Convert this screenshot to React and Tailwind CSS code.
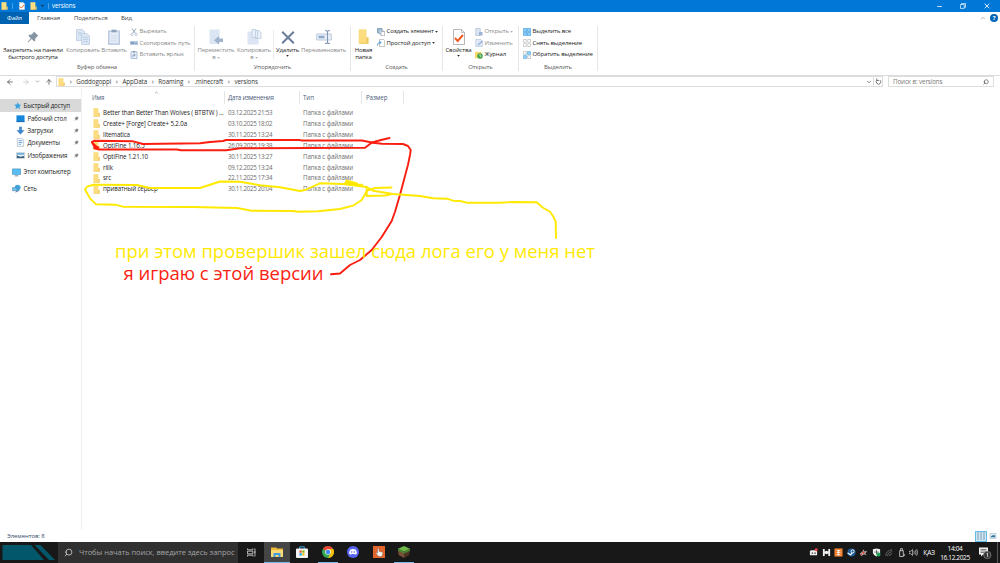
import { Minus, X, Search, ChevronDown, ChevronUp, ArrowLeft, ArrowRight, ArrowUp } from "lucide-react";

const files = [
  { name: "Better than Better Than Wolves ( BTBTW ) ...", date: "03.12.2025 21:53" },
  { name: "Create+ [Forge] Create+ 5.2.0a", date: "03.10.2025 18:02" },
  { name: "litematica", date: "30.11.2025 13:24" },
  { name: "OptiFine 1.16.5", date: "26.09.2025 19:38" },
  { name: "OptiFine 1.21.10", date: "30.11.2025 13:27" },
  { name: "rilik", date: "09.12.2025 13:24" },
  { name: "src", date: "22.11.2025 17:34" },
  { name: "приватный сервер", date: "30.11.2025 20:04" },
];

const crumbs = ["Goddogoppi", "AppData", "Roaming", ".minecraft", "versions"];

function Folder({ className }) {
  return (
    <svg viewBox="0 0 8 9" className={className} preserveAspectRatio="none">
      <path d="M0.5 0.2h5.700v8.500h-5.700z" fill="#fbdc7e" />
      <path d="M6 5h1.700v3.800h-6.500l-.7-.6h5.500z" fill="#efc65c" />
    </svg>
  );
}

function CheckDoc({ className }) {
  return (
    <svg viewBox="0 0 12 16" className={className}>
      <path d="M.5.5h8l3 3v12h-11z" fill="#fff" stroke="#a5a5a5" strokeWidth=".8" />
      <path d="M8.5.5v3h3" fill="none" stroke="#a5a5a5" strokeWidth=".7" />
      <path d="M2 9l2.700 3 5.300-6" fill="none" stroke="#ee5a24" strokeWidth="1.900" />
    </svg>
  );
}

function Pin({ className, fill = "#8795a3" }) {
  return (
    <svg viewBox="0 0 12 12" className={className}>
      <path d="M7 .6l4.400 4.400-1.200.5-1.900 1.900-.1 2.300-1 .9-2.500-2.500-3.700 3.300-.5-.5 3.300-3.700-2.500-2.500.9-1 2.300-.1 1.900-1.900z" fill={fill} />
    </svg>
  );
}

function CopyIcon({ className }) {
  return (
    <svg viewBox="0 0 14 16" className={className}>
      <g fill="#dbe6f4" stroke="#b8c9df" strokeWidth=".7">
        <path d="M.5.5h6l2 2v9h-8z" />
        <path d="M5.500 4.500h5.500l2.500 2.500v8.500h-8z" />
        <path d="M7 8.500h5M7 10.500h5M7 12.500h5M2 3.500h3M2 5.500h3" />
      </g>
    </svg>
  );
}

function PasteIcon({ className }) {
  return (
    <svg viewBox="0 0 12 16" className={className}>
      <path d="M.8 2h10.400v13.200h-10.400z" fill="#e4ecf7" stroke="#adbfda" strokeWidth="1.200" />
      <path d="M3.500.7h5v2.600h-5z" fill="#8ea0b8" />
      <path d="M3 7h6M3 9.500h6M3 12h6" stroke="#c8d6e8" strokeWidth=".7" />
    </svg>
  );
}

function MoveIcon() {
  return (
    <svg viewBox="0 0 14 16" className="h-4 w-3.5">
      <path d="M.5.5h10v14.500h-10z" fill="#dbe5f3" />
      <path d="M14 9.500v3.500h-4v2.500l-5-4.200 5-4.200v2.400z" fill="#9fb3cf" />
    </svg>
  );
}

function CopyToIcon() {
  return (
    <svg viewBox="0 0 15 16" className="h-4 w-[15px]">
      <path d="M.5 2.500h11v13h-11z" fill="#dbe5f3" />
      <path d="M5 .5h4l1.500 1.500v6.500h-5.500zM8.500 1.500h3.500l2 2v6h-5.500z" fill="#e8eff8" stroke="#b4c5dc" strokeWidth=".7" />
    </svg>
  );
}

function DeleteIcon() {
  return (
    <svg viewBox="0 0 14 16" className="h-4 w-3.5">
      <path d="M1.200 2.700l11.600 11.600M12.800 2.700l-11.600 11.600" stroke="#6c7f9c" strokeWidth="2.100" />
    </svg>
  );
}

function RenameIcon() {
  return (
    <svg viewBox="0 0 16 16" className="size-4">
      <path d="M.7 5h14.600v6h-14.600z" fill="#eaf0f8" stroke="#b7c7de" strokeWidth=".9" />
      <path d="M2.500 6.700h6v2.600h-6z" fill="#8fa9cd" />
      <path d="M9 1.500c1.500 0 2.500.3 2.500 1v11c0 .7-1 1-2.500 1M14 1.500c-1.500 0-2.500.3-2.500 1M14 14.500c-1.500 0-2.500-.3-2.500-1" fill="none" stroke="#8295b2" strokeWidth="1.100" />
    </svg>
  );
}

const smallIcons = {
  cut: (
    <>
      <path d="M2 .5l3.500 5M6 .5l-3.500 5" stroke="#91a0b6" strokeWidth=".9" />
      <circle cx="1.800" cy="6.500" r="1.100" fill="none" stroke="#a9bad3" strokeWidth=".8" />
      <circle cx="6.200" cy="6.500" r="1.100" fill="none" stroke="#a9bad3" strokeWidth=".8" />
    </>
  ),
  path: (
    <>
      <path d="M0 2h8v4h-8z" fill="#b5c8e2" />
      <path d="M1 3l.7 2 .8-2 .8 2 .7-2M5 4.500h2" fill="none" stroke="#6480a8" strokeWidth=".6" />
    </>
  ),
  shortcut: (
    <>
      <path d="M1 .8h6v6.700h-6z" fill="#e8eff8" stroke="#9db1cd" strokeWidth=".8" />
      <path d="M3 0h2v1.500h-2z" fill="#8296b4" />
      <path d="M3 6v-2h2M3.800 2.800l1.500 1.200-1.500 1.200" fill="none" stroke="#7189ad" strokeWidth=".7" />
    </>
  ),
  create: (
    <>
      <path d="M.3.3h4.500v4.500h-4.500z" fill="#9cc4dc" stroke="#59798d" strokeWidth=".6" />
      <path d="M2 2h4v4h-4z" fill="#cfe3ef" stroke="#7792a5" strokeWidth=".5" />
      <path d="M4 3.500h3.700v4.200h-3.700z" fill="#fff" stroke="#889" strokeWidth=".6" />
    </>
  ),
  access: (
    <>
      <path d="M2.500.4h4l1.200 1.200v6h-5.200z" fill="#fff" stroke="#999" strokeWidth=".6" />
      <path d="M.5 6.500c0-2 1-3 3-3M2.500 2l1.700 1.500-1.700 1.500" fill="none" stroke="#3b8fce" strokeWidth=".9" />
    </>
  ),
  open: (
    <>
      <path d="M.8.5h4.500v7h-4.500z" fill="#dbe5f3" stroke="#adbfd9" strokeWidth=".7" />
      <path d="M4 4h3.500v3.500h-3.500z" fill="#9fb5d5" />
    </>
  ),
  edit: (
    <>
      <path d="M.8.5h5l1.500 1.500v5.500h-6.500z" fill="#e0eaf6" stroke="#b4c6df" strokeWidth=".7" />
      <path d="M3 6l4.500-4" stroke="#8facd6" strokeWidth="1.200" />
    </>
  ),
  journal: (
    <>
      <path d="M0 .8h6.500v6.500h-6.500z" fill="#f6d96e" />
      <circle cx="5" cy="5" r="2.800" fill="#43a348" />
      <path d="M5 3.300v1.900h1.500" fill="none" stroke="#fff" strokeWidth=".7" />
    </>
  ),
  all: (
    <path d="M.4.4h3.200v3.200h-3.200zM4.400.4h3.200v3.200h-3.200zM.4 4.400h3.200v3.200h-3.200zM4.400 4.400h3.200v3.200h-3.200z" fill="#93cdf5" stroke="#3ba0e4" strokeWidth=".7" />
  ),
  none: (
    <path d="M.5.5h2.800v2.800h-2.800zM4.700.5h2.800v2.800h-2.800zM.5 4.700h2.800v2.800h-2.800zM4.700 4.700h2.800v2.800h-2.800z" fill="#fff" stroke="#b4b4b4" strokeWidth=".6" />
  ),
  invert: (
    <>
      <path d="M.5.5h2.800v2.800h-2.800zM4.700 4.700h2.800v2.800h-2.800z" fill="#fff" stroke="#aaa" strokeWidth=".6" />
      <path d="M4.400.4h3.200v3.200h-3.200zM.4 4.400h3.200v3.200h-3.200z" fill="#93cdf5" stroke="#5eb0e8" strokeWidth=".7" />
    </>
  ),
};

function Caret({ muted }) {
  return (
    <svg viewBox="0 0 4 3" className="h-[2px] w-[3px] shrink-0">
      <path d="M0 0h4l-2 2.600z" fill={muted ? "#aaa" : "#222"} />
    </svg>
  );
}

function SmallRow({ icon, label, muted, caret }) {
  return (
    <div className={`flex h-[11.5px] items-center gap-[1.5px] ${muted ? "text-[#8a8a8a]" : "text-[#222]"}`}>
      <svg viewBox="0 0 8 8" className="size-2 shrink-0">{smallIcons[icon]}</svg>
      <span>{label}</span>
      {caret && <Caret muted={muted} />}
    </div>
  );
}

function BigButton({ icon, lines, width, muted, caret }) {
  return (
    <div className={`flex shrink-0 flex-col items-center ${width} ${muted ? "text-[#8a8a8a]" : "text-[#222]"}`}>
      <div className="flex h-[21px] items-center justify-center">{icon}</div>
      {lines.map((line, i) => (
        <div key={i} className="flex h-[7px] items-center gap-px leading-[7px]">
          {line}
          {line === "в" && <Caret muted />}
        </div>
      ))}
      {caret && <div className="pt-px"><Caret /></div>}
    </div>
  );
}

function Group({ label, width, children }) {
  return (
    <div className={`flex h-[45px] shrink-0 flex-col border-r border-[#e6e6e6] ${width}`}>
      <div className="flex h-[37px]">{children}</div>
      <div className="text-center leading-2 text-[#5a5a5a]">{label}</div>
    </div>
  );
}

function Ribbon() {
  return (
    <div className="flex h-[52px] border-b border-[#dadbdc] pt-0.5 text-[6px] tracking-[-0.13px]">
      <Group label="Буфер обмена" width="w-[195px]">
        <BigButton icon={<Pin className="size-3" />} lines={["Закрепить на панели", "быстрого доступа"]} width="w-[66px]" />
        <BigButton icon={<CopyIcon className="h-4 w-3.5" />} lines={["Копировать"]} width="w-[34px]" muted />
        <BigButton icon={<PasteIcon className="h-4 w-3" />} lines={["Вставить"]} width="w-[28px]" muted />
        <div className="pl-[2px]">
          <SmallRow icon="cut" label="Вырезать" muted />
          <SmallRow icon="path" label="Скопировать путь" muted />
          <SmallRow icon="shortcut" label="Вставить ярлык" muted />
        </div>
      </Group>
      <Group label="Упорядочить" width="w-[156px]">
        <BigButton icon={<MoveIcon />} lines={["Переместить", "в"]} width="w-[42px]" muted />
        <BigButton icon={<CopyToIcon />} lines={["Копировать", "в"]} width="w-[34px]" muted />
        <div className="my-1 ml-0.5 w-px bg-[#ececec]" />
        <BigButton icon={<DeleteIcon />} lines={["Удалить"]} width="w-[27px]" caret />
        <BigButton icon={<RenameIcon />} lines={["Переименовать"]} width="w-[45px]" muted />
      </Group>
      <Group label="Создать" width="w-[92px]">
        <BigButton icon={<Folder className="h-[15px] w-[11px]" />} lines={["Новая", "папка"]} width="w-[25px]" />
        <div className="pl-px">
          <SmallRow icon="create" label="Создать элемент" caret />
          <SmallRow icon="access" label="Простой доступ" caret />
        </div>
      </Group>
      <Group label="Открыть" width="w-[76px]">
        <BigButton icon={<CheckDoc className="h-4 w-3" />} lines={["Свойства"]} width="w-[31px]" caret />
        <div className="pl-px">
          <SmallRow icon="open" label="Открыть" muted caret />
          <SmallRow icon="edit" label="Изменить" muted />
          <SmallRow icon="journal" label="Журнал" />
        </div>
      </Group>
      <Group label="Выделить" width="w-[79px]">
        <div className="pl-1">
          <SmallRow icon="all" label="Выделить все" />
          <SmallRow icon="none" label="Снять выделение" />
          <SmallRow icon="invert" label="Обратить выделение" />
        </div>
      </Group>
    </div>
  );
}

function TitleBar() {
  return (
    <div className="flex h-3 items-center bg-[#0178d7] text-white">
      <Folder className="ml-px h-2 w-[7px]" />
      <div className="ml-[3.5px] h-1.5 w-px bg-[#4a9fe3]" />
      <CheckDoc className="ml-[6px] h-2 w-1.5" />
      <Folder className="ml-[5px] h-2 w-[7px]" />
      <span className="ml-1 flex"><Caret /></span>
      <div className="ml-1 h-1.5 w-px bg-[#4a9fe3]" />
      <span className="ml-[3.5px] text-[6.2px] tracking-[-0.1px]">versions</span>
      <div className="ml-auto flex items-center pr-[9px]">
        <Minus size={7} strokeWidth={2.5} />
        <svg viewBox="0 0 7 7" className="ml-[17px] size-[6px]">
          <path d="M.5 1.800h4.500v4.500h-4.500zM1.800 1.800v-1.300h4.700v4.500h-1.500" fill="none" stroke="#fff" strokeWidth=".8" />
        </svg>
        <X size={8} strokeWidth={2.5} className="ml-[17px]" />
      </div>
    </div>
  );
}

function TabBar() {
  return (
    <div className="flex h-3 items-center text-[6px] tracking-[-0.12px] text-[#444]">
      <div className="flex h-full w-[29px] items-center justify-center bg-[#0063b1] text-white">Файл</div>
      <span className="w-[37px] pl-[8px]">Главная</span>
      <span className="w-[55px] pl-[8px]">Поделиться</span>
      <span>Вид</span>
      <ChevronUp size={6} strokeWidth={3} className="ml-auto text-[#999]" />
      <div className="mr-[2px] ml-1 flex size-2 items-center justify-center rounded-full bg-[#0067b8] text-[6px] font-bold text-white">?</div>
    </div>
  );
}

function AddressBar() {
  return (
    <div className="flex h-[12px] items-start text-[6.2px] tracking-[-0.08px] text-[#333]">
      <div className="flex h-[11px] w-[56px] items-center pl-[6px]">
        <ArrowLeft size={8} className="text-[#333]" />
        <ArrowRight size={8} className="ml-[8px] text-[#bbb]" />
        <ChevronDown size={5} strokeWidth={3} className="ml-[5px] text-[#777]" />
        <ArrowUp size={8} className="ml-[5px] text-[#333]" />
      </div>
      <div className="flex h-[11px] w-[827px] items-center border border-[#dedede]">
        <Folder className="mr-0 ml-px h-2 w-[7px]" />
        {crumbs.map((c) => (
          <span key={c} className="flex items-center">
            <span className="w-[11.3px] pb-px text-center text-[7px] leading-none text-[#444]">›</span>
            <span>{c}</span>
          </span>
        ))}
        <ChevronDown size={6} strokeWidth={3} className="mr-[1px] ml-auto text-[#555]" />
        <div className="flex h-full w-[9px] items-center justify-center border-l border-[#dedede]">
          <svg viewBox="0 0 8 8" className="size-[7px]">
            <path d="M2.500 2.300a2.600 2.600 0 1 0 3.200.1M2 .5v2.300h2.500" fill="none" stroke="#555" strokeWidth=".9" />
          </svg>
        </div>
      </div>
      <div className="ml-[5px] flex h-[11px] w-[106px] items-center justify-between border border-[#dedede] pr-1 pl-1 text-[#777]">
        <span>Поиск в: versions</span>
        <Search size={6} strokeWidth={2.5} className="-scale-x-100 text-[#444]" />
      </div>
    </div>
  );
}

const sideIcons = {
  star: <path d="M5 .3l1.400 3 3.400.4-2.500 2.300.7 3.500-3-1.700-3 1.700.7-3.500-2.500-2.300 3.400-.4z" fill="#3b9fe0" />,
  desktop: (
    <>
      <path d="M.5 1.500h9v7h-9z" fill="#1487dc" />
      <path d="M.5 8h9v1h-9z" fill="#0b5da5" />
    </>
  ),
  down: <path d="M3.500.7h3v4h3l-4.500 4.800-4.500-4.800h3z" fill="#3f86cd" />,
  docs: (
    <>
      <path d="M1.500.5h5.500l1.500 1.500v7.500h-7z" fill="#f5f8fb" stroke="#9ab" strokeWidth=".6" />
      <path d="M3 3h4M3 5h4M3 7h2.500" stroke="#4a90c8" strokeWidth=".8" />
    </>
  ),
  images: (
    <>
      <path d="M.5 1.800h9v6.400h-9z" fill="#e7f1f8" stroke="#aab6c0" strokeWidth=".6" />
      <path d="M1 7.800v-3l3.500 1.500 4.500-.8v2.300z" fill="#3b5f7c" />
      <path d="M1 2.200h8v2h-8z" fill="#6db1df" />
    </>
  ),
  pc: (
    <>
      <path d="M.4 1h9.200v6.200h-9.200z" fill="#58bdf2" stroke="#3d88b8" strokeWidth=".6" />
      <path d="M3 8.700h4" stroke="#5c89a8" />
    </>
  ),
  net: (
    <>
      <circle cx="6.300" cy="4" r="3.200" fill="#45a5df" />
      <path d="M.5 4h5v3.500h-5z" fill="#6fc0ee" stroke="#326f9e" strokeWidth=".5" />
      <path d="M4 9l4-2" stroke="#30699a" />
    </>
  ),
};

function SideItem({ icon, label, className, pinned, iconSize = "size-[9px] mr-[2.5px]" }) {
  return (
    <div className={`flex shrink-0 items-center ${className}`}>
      <svg viewBox="0 0 10 10" className={`shrink-0 ${iconSize}`}>{sideIcons[icon]}</svg>
      <span>{label}</span>
      {pinned && <Pin className="mr-[2px] ml-auto size-[5px]" fill="#808080" />}
    </div>
  );
}

function Sidebar() {
  return (
    <div className="flex w-[82px] flex-col border-r border-[#f0f0f0] pt-[11px] text-[6.2px] tracking-[-0.16px] text-[#222]">
      <SideItem icon="star" label="Быстрый доступ" className="h-[13px] w-[81px] bg-[#d9d9d9] pl-[13.5px]" iconSize="size-[7.5px] mr-[2.5px]" />
      <SideItem icon="desktop" label="Рабочий стол" className="h-[12.4px] pl-[16px]" pinned />
      <SideItem icon="down" label="Загрузки" className="h-[12.4px] pl-[16px]" pinned />
      <SideItem icon="docs" label="Документы" className="h-[12.4px] pl-[16px]" pinned />
      <SideItem icon="images" label="Изображения" className="h-[12.4px] pl-[16px]" pinned />
      <SideItem icon="pc" label="Этот компьютер" className="mt-[4px] h-[13px] pl-[12px]" />
      <SideItem icon="net" label="Сеть" className="mt-[3.5px] h-[13px] pl-[12px]" />
    </div>
  );
}

function FileList() {
  return (
    <div className="flex-1 text-[6.2px] text-[#6d6d6d]">
      <div className="flex h-4 items-center pt-[3px] tracking-[-0.1px] text-[#4c607a]">
        <div className="flex h-[13px] w-[143px] items-center border-r border-[#e5e5e5] pl-[10px]">
          Имя
          <ChevronUp size={5} strokeWidth={3} className="mb-2.5 ml-[50px] text-[#888]" />
        </div>
        <div className="flex h-[13px] w-[75px] items-center border-r border-[#e5e5e5] pl-[3px] tracking-[-0.25px]">Дата изменения</div>
        <div className="flex h-[13px] w-[62px] items-center border-r border-[#e5e5e5] pl-[3px]">Тип</div>
        <div className="flex h-[13px] w-[42px] items-center border-r border-[#e5e5e5] pl-[4px]">Размер</div>
      </div>
      <div className="pt-[3px]">
        {files.map((f) => (
          <div key={f.name} className="flex h-[10.94px] items-center">
            <div className="flex w-[146px] items-center pl-[11px] tracking-[-0.12px] text-[#222]">
              <Folder className="mr-[3px] h-[9px] w-[7px] shrink-0" />
              {f.name}
            </div>
            <div className="w-[75px] tracking-[-0.3px]">{f.date}</div>
            <div className="tracking-[-0.12px]">Папка с файлами</div>
          </div>
        ))}
      </div>
    </div>
  );
}

function StatusBar() {
  return (
    <div className="flex h-3 items-center pr-[3px] pl-[7px] text-[6px] tracking-[-0.08px] text-[#33496b]">
      Элементов: 8
      <div className="ml-auto flex h-[11px] w-3 items-center justify-center border border-[#66bce8] bg-[#cce8f6]">
        <svg viewBox="0 0 8 8" className="size-2">
          <path d="M0 1h2M3 1h2M6 1h2M0 3h2M3 3h2M6 3h2M0 5h2M3 5h2M6 5h2M0 7h2M3 7h2M6 7h2" stroke="#789" strokeWidth=".8" />
        </svg>
      </div>
      <svg viewBox="0 0 8 7" className="ml-[2px] h-[6px] w-2">
        <path d="M.5.5h7v6h-7z" fill="#dceaf2" stroke="#a5b5bf" strokeWidth=".6" />
        <path d="M1.500 4l2-1.500h3v2.500h-5z" fill="#30799e" />
      </svg>
    </div>
  );
}

const apps = [
  {
    id: "explorer",
    box: "bg-[#454545]",
    line: "w-full",
    icon: (
      <>
        <path d="M0 1.500h5l1 1h6v8.500h-12z" fill="#f0b93a" />
        <path d="M0 4h12v7h-12z" fill="#fcd977" />
        <path d="M2.500 11v-4h7v4h-2v-2h-3v2z" fill="#3f9be0" />
      </>
    ),
  },
  {
    id: "store",
    icon: (
      <>
        <path d="M3.700 3v-2.200h4.600v2.200" fill="none" stroke="#36a8e0" strokeWidth="1" />
        <rect y="2.500" width="12" height="9.500" rx="1" fill="#f4f4f4" />
        <path d="M3.500 4.500h2.200v2.200h-2.200z" fill="#f25022" />
        <path d="M6.300 4.500h2.200v2.200h-2.200z" fill="#7fba00" />
        <path d="M3.500 7.300h2.200v2.200h-2.200z" fill="#00a4ef" />
        <path d="M6.300 7.300h2.200v2.200h-2.200z" fill="#ffb900" />
      </>
    ),
  },
  {
    id: "chrome",
    line: "w-[20px]",
    icon: (
      <>
        <circle cx="6" cy="6" r="6" fill="#34a853" />
        <path d="M6 6l-5.200-3a6 6 0 0 1 10.400 0z" fill="#ea4335" />
        <path d="M6 3h5.200a6 6 0 0 1-5.200 9l2.600-4.500z" fill="#fbbc05" />
        <circle cx="6" cy="6" r="2.800" fill="#fff" />
        <circle cx="6" cy="6" r="2.200" fill="#4285f4" />
      </>
    ),
  },
  {
    id: "discord",
    icon: (
      <>
        <circle cx="6" cy="6" r="6" fill="#5865f2" />
        <path d="M3.500 3.500q2.500-.8 5 0 1.500 2 1.300 4.300-.8.700-1.800.9l-.5-.8h-3l-.5.800q-1-.2-1.800-.9-.2-2.300 1.300-4.300z" fill="#fff" />
        <circle cx="4.700" cy="6" r=".8" fill="#5865f2" />
        <circle cx="7.300" cy="6" r=".8" fill="#5865f2" />
      </>
    ),
  },
  {
    id: "clicker",
    icon: (
      <>
        <path d="M0 0h12v12h-12z" fill="#e4652d" />
        <path d="M4.500 2.500q.8-.7 1.500 0v2.800l3.300.8q.7.200.5 1.200l-.8 3.200h-3.500l-2.700-3.500q.5-.8 1.700 0z" fill="#f3f3f3" stroke="#6b4c3c" strokeWidth=".4" />
      </>
    ),
  },
  {
    id: "minecraft",
    line: "w-[20px]",
    icon: (
      <>
        <path d="M6 0l6 2.700-6 3-6-3z" fill="#72b94b" />
        <path d="M0 2.700l6 3v6.300l-5.300-3z" fill="#775037" />
        <path d="M12 2.700l-6 3v6.300l5.300-3z" fill="#4e3324" />
        <path d="M0 2.700l6 3v2l-1.500-.8v-.8l-1.500.2-1.500-1-1.500-.4zM12 2.700l-6 3v1.800l2-1.300 1 .5 1.500-1.500 1.500-.3z" fill="#478a32" />
      </>
    ),
  },
];

const tray = [
  <><path d="M1 4l1-1.500h6l1 1.500v4h-8z" fill="#eee" /><path d="M3 5h1.500v1.500h-1.500zM6 5h1.500v1.500h-1.500z" fill="#333" /><circle cx="8" cy="2" r="1.600" fill="#f23f43" /></>,
  <path d="M1 1h2v8h-2zM7 1h2v8h-2zM3 4l2-1 2 1v2l-2 1-2-1z" fill="#eee" />,
  <><path d="M.5.5h9v9h-9z" fill="#f08332" /><path d="M3 3h4M5 2v6M3 5h4M3 7.500h4" stroke="#fff" strokeWidth=".9" /></>,
  <><circle cx="5" cy="5" r="4.500" fill="#1e5c98" /><circle cx="6.300" cy="3.700" r="1.700" fill="none" stroke="#fff" /><path d="M.6 5.500l3.500 2 1.700-2" stroke="#fff" strokeWidth="1.300" fill="none" /></>,
  <><path d="M1 6l3-2 1-2.500 1 2.500 3-1-2 3 1.500 2-3-1-3 2z" fill="#bbb" /><circle cx="5" cy="5" r="1.300" fill="#db3c30" /><circle cx="2.500" cy="7" r="1" fill="#db3c30" /></>,
  <><path d="M1 1.500l4-1 4 1v4q-1 3-4 4-3-1-4-4z" fill="#f3f3f3" /><path d="M5 2v5M2.500 4.500h5" stroke="#333" strokeWidth=".7" /><circle cx="7.200" cy="7.200" r="2.300" fill="#21a35b" /></>,
  <path d="M2 9q0-6 7-7M4 9q0-4 5-5M6 9q0-2 3-2.700" fill="none" stroke="#777" strokeWidth=".9" />,
  <path d="M3 3h4v6.500h-4zM4 3v-2.300h2v2.300M8 9v-2.500" fill="none" stroke="#eee" strokeWidth=".8" />,
  <path d="M0 3.700h2l2-2v6.600l-2-2h-2zM5.500 3.500q1 1.500 0 3M7 2.500q1.700 2.500 0 5M8.500 1.300q2.200 3.700 0 7.400" fill="none" stroke="#eee" strokeWidth=".7" />,
];

function Taskbar() {
  return (
    <div className="flex h-[21px] bg-[#181818] text-white">
      <svg viewBox="0 0 58 21" className="h-[21px] w-[58px] shrink-0">
        <path d="M2.500 3h28.500l13 15h-41.500z" fill="#02586a" />
        <path d="M34.500 3h6l14.500 15h-6z" fill="#02586a" />
      </svg>
      <div className="flex w-[180px] shrink-0 items-center bg-[#303030] pl-[6px] text-[7.5px] tracking-[-0.04px] text-[#a5a5a5]">
        <Search size={9} strokeWidth={2} className="mr-[6px] shrink-0 -scale-x-100 text-[#ddd]" />
        <span>Чтобы начать поиск, введите здесь запрос</span>
      </div>
      <div className="flex w-[26px] items-center justify-center">
        <svg viewBox="0 0 10 10" className="size-[9px]">
          <path d="M.5.500v1.500h6v-1.500M.5 9.500v-1.500h6v1.500M.5 3.500h6v3h-6zM8.800.5v9M8 4.500h1.700" fill="none" stroke="#ddd" strokeWidth=".9" />
        </svg>
      </div>
      {apps.map((app) => (
        <div key={app.id} className={`flex w-[25.5px] flex-col items-center ${app.box || ""}`}>
          <div className="flex h-5 items-center">
            <svg viewBox="0 0 12 12" className="size-3">{app.icon}</svg>
          </div>
          <div className={`h-px bg-[#76b9ed] ${app.line || "w-0"}`} />
        </div>
      ))}
      <div className="ml-auto flex items-center">
        {tray.map((icon, i) => (
          <div key={i} className="flex w-[12.5px] justify-center">
            <svg viewBox="0 0 10 10" className="size-[9px]">{icon}</svg>
          </div>
        ))}
        <span className="w-[18px] text-center text-[6.5px] tracking-[-0.2px]">ҚАЗ</span>
        <div className="w-[34px] text-center text-[6.5px] leading-[9px] tracking-[-0.35px]">
          <div>14:04</div>
          <div>16.12.2025</div>
        </div>
        <svg viewBox="0 0 14 14" className="ml-[6px] size-[14px]">
          <path d="M1 1.500h9v7h-5l-2 2v-2h-2z" fill="#f3f3f3" />
          <path d="M2.500 3.500h6M2.500 5h6M2.500 6.500h4" stroke="#333" strokeWidth=".6" />
          <circle cx="9.300" cy="9" r="3.700" fill="#333" stroke="#999" strokeWidth=".6" />
          <path d="M8.600 7.700l1-.7v4" fill="none" stroke="#fff" strokeWidth=".7" />
        </svg>
        <div className="ml-[5px] h-[21px] w-[3px] border-l border-[#555]" />
      </div>
    </div>
  );
}

const redLines = [
  "98,148 93,143.5 92,142 94,140.7 133,141.300 143,144 200,143.300 210,142 223,141 226,140 300,140 301,140.500 362,140.500 373,142.700 382,143.800 403,144 408,146 410.700,150 410,155 408,164.700 400,194.700 395,211.700 391.700,221 381.700,237 371.700,250 360,260 350,265 340,273.500 331,274.300",
  "92,142 94,146 98,147.500 94,148 99,149.500 177,149.500 181,150.300 226,150.300 240,148.300 365,147.700 372,142.500 381,140 389.500,138",
];

const yellowLines = [
  "93,184.700 136.700,185 150,188 200,188 220,181.500 240,181.700 260,185.300 280,187.300 300,191 305,190 320,183.300 343,184 366.700,187 373,190.700 393,194 420,196 433,198.300 447,198.700 453,200.700 460,201 466.700,202.700 500,202.700 513,202 536.700,202.300 543,207.700 550,211.700 553,216 555.700,221.700 556,238",
  "93,185 87,186.700 85,189.500 90,198.300 96,204.300 115,204.700 123,206.700 193,207 237,208 251.700,210.700 293,211 298,211.700 318,211.300 340,209 353,205.700 361.700,200 367,190.700 375,188 391.500,187.500",
  "366.700,188 366.700,196 385,195.500 391,194.300",
  "345,183 357,183.500 346.500,180.500 346,182 352,184.500 362,184.700",
];

// Freehand marker lines with their captions
function Notes() {
  return (
    <svg viewBox="0 0 1000 563" className="pointer-events-none absolute inset-0 h-full w-full">
      <g fill="none" stroke="#fa1e10" strokeWidth="1.900" strokeLinejoin="round" strokeLinecap="round">
        {redLines.map((points) => <polyline key={points} points={points} />)}
      </g>
      <g fill="none" stroke="#ffe900" strokeWidth="1.900" strokeLinejoin="round" strokeLinecap="round">
        {yellowLines.map((points) => <polyline key={points} points={points} />)}
      </g>
      <g fontFamily="'Open Sans', 'Noto Sans', sans-serif" fontSize="18.600">
        <text x="115" y="257.600" fill="#ffe900" textLength="480" lengthAdjust="spacingAndGlyphs">при этом провершик зашел сюда лога его у меня нет</text>
        <text x="123.500" y="279.600" fill="#fa1e10" textLength="200" lengthAdjust="spacingAndGlyphs">я играю с этой версии</text>
      </g>
    </svg>
  );
}

export default function App() {
  return (
    <div className="relative flex h-[563px] w-[1000px] flex-col overflow-hidden bg-white font-['Open_Sans','Noto_Sans',sans-serif] whitespace-nowrap">
      <TitleBar />
      <TabBar />
      <Ribbon />
      <AddressBar />
      <div className="flex min-h-0 flex-1">
        <Sidebar />
        <FileList />
      </div>
      <StatusBar />
      <Taskbar />
      <Notes />
    </div>
  );
}
